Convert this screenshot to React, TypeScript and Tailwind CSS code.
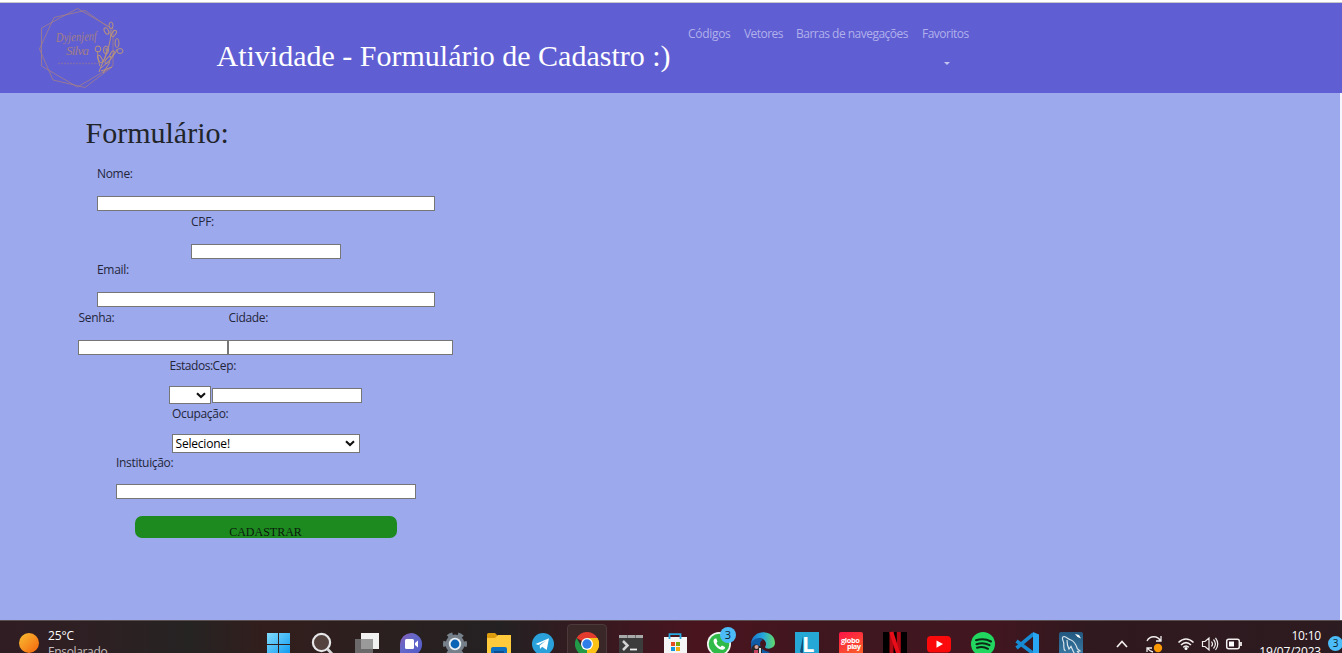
import type { ReactNode } from "react";

const ui = "font-['Open_Sans','Noto_Sans',sans-serif]";
const serif = "font-['Liberation_Serif',serif] tracking-normal";

function Logo() {
  return (
    <svg width="90" height="84" viewBox="36 6 90 84" fill="none" stroke="#a37f86" strokeWidth="0.8">
      <path d="M77.5 8.5 L113 29 V66 L77.5 87 L41.5 66 V28 Z" />
      <path d="M85 10.5 L54 17.500 L39.500 49 L53 80 L85 87.500 L112 67 M85 10.500 L108 27" />
      <g strokeWidth="1" stroke="#b8937c">
        <path d="M99 72 C104 58 111 47 111 30 M101 68 C108 62 114 57 117 49 M100 66 C98 59 97 54 98 51 M103 62 C106 57 107 53 106 48" />
        <ellipse cx="111" cy="25.500" rx="2" ry="3.500" />
        <ellipse cx="106.500" cy="31" rx="2" ry="3.500" transform="rotate(-30 106.500 31)" />
        <ellipse cx="114" cy="33.500" rx="1.800" ry="3.500" transform="rotate(35 114 33.500)" />
        <ellipse cx="117" cy="43" rx="2" ry="4.500" />
        <ellipse cx="120" cy="51" rx="3" ry="2.500" />
        <ellipse cx="106" cy="50" rx="2.500" ry="4" />
        <ellipse cx="98" cy="49" rx="2.800" ry="3" />
        <ellipse cx="100" cy="59" rx="1.800" ry="4" transform="rotate(-25 100 59)" />
        <ellipse cx="108" cy="60" rx="1.800" ry="4" transform="rotate(40 108 60)" />
        <ellipse cx="112" cy="54" rx="1.500" ry="3.500" transform="rotate(30 112 54)" />
        <path d="M101 71 L112 67 M103 73 L110 62" />
      </g>
      <g fill="#a37f86" stroke="none" fontFamily="Liberation Serif, serif" fontStyle="italic">
        <text x="56" y="41" fontSize="13" textLength="41" lengthAdjust="spacingAndGlyphs" transform="rotate(-2 76 40)">Dyjenjenf</text>
        <text x="66" y="55" fontSize="13" textLength="23">Silva</text>
      </g>
      <path d="M58 63.500 H98" strokeDasharray="2 1" strokeWidth="1.500" opacity="0.450" />
    </svg>
  );
}

function Field({ label, children, className = "" }: { label: string; children: ReactNode; className?: string }) {
  return (
    <label className={`flex flex-col justify-between ${className}`}>
      <span className="h-[22px] whitespace-nowrap pl-[0.5px] leading-[22px]">{label}</span>
      {children}
    </label>
  );
}

const inputBase = "block h-[15px] border border-[#767676] bg-white outline-none";

function Chevron() {
  return (
    <svg width="10" height="7" viewBox="0 0 10 7" fill="none" stroke="#111" strokeWidth="2.100">
      <path d="M1 1.200 L5 5 L9 1.200" />
    </svg>
  );
}

function Ico({ children }: { children: ReactNode }) {
  return (
    <div className="flex w-11 shrink-0 justify-center pt-[11px]">
      <svg width="24" height="24" viewBox="0 0 24 24" className="overflow-visible">{children}</svg>
    </div>
  );
}

function Apps() {
  return (
    <div className="flex h-12 items-start tracking-normal">
      <Ico>
        <defs>
          <linearGradient id="win" x1="0" y1="0" x2="1" y2="1"><stop stopColor="#82dcff" /><stop offset="1" stopColor="#0a98f0" /></linearGradient>
        </defs>
        <path fill="url(#win)" d="M0 1H11V12H0ZM12 1H23V12H12ZM0 13H11V24H0ZM12 13H23V24H12Z" />
      </Ico>
      <Ico>
        <circle cx="10.500" cy="10.500" r="8.600" fill="#54423f" stroke="#e6e6e8" strokeWidth="2.200" />
        <path d="M16.500 17 L22.500 23.500" stroke="#d8d8da" strokeWidth="2.800" />
      </Ico>
      <Ico>
        <path fill="#f1f1f1" d="M6 1H24V17H6Z" />
        <path fill="#6b6969" d="M0 7H18V22H0Z" />
        <path fill="#9a9a9a" d="M6 7H18V17H6Z" />
      </Ico>
      <Ico>
        <defs><linearGradient id="chat" x1="0" y1="0" x2="1" y2="1"><stop stopColor="#8a5bb5" /><stop offset="0.400" stopColor="#6468c8" /><stop offset="1" stopColor="#5058c8" /></linearGradient></defs>
        <path fill="url(#chat)" d="M12 1A11.300 11.300 0 1 1 6 22L1 24V12A11.300 11.300 0 0 1 12 1Z" />
        <rect x="6" y="7" width="9" height="10" rx="1.500" fill="#fff" />
        <path d="M16 11L19 8.500V15.500L16 13Z" fill="#fff" />
      </Ico>
      <Ico>
        <circle cx="12" cy="12" r="7" fill="none" stroke="#76808a" strokeWidth="5" />
        <circle cx="12" cy="12" r="10.200" fill="none" stroke="#76808a" strokeWidth="3.600" strokeDasharray="5.300 5.380" transform="rotate(-15 12 12)" />
        <circle cx="12" cy="12" r="6.200" fill="#e9eef3" />
        <circle cx="12" cy="12" r="4.400" fill="#0b63b5" />
      </Ico>
      <Ico>
        <path fill="#dc9c0e" d="M0 2.500A1.500 1.500 0 0 1 1.500 1H8L11 4V8H0Z" />
        <path fill="#ffcb3d" d="M0 6H8L11 3H24V22H0Z" />
        <path fill="#0f6fc0" d="M4 22V17A2 2 0 0 1 6 15H18A2 2 0 0 1 20 17V22Z" />
        <path fill="#0a4e90" d="M7 19H17V21H7Z" />
      </Ico>
      <Ico>
        <circle cx="12" cy="12" r="11" fill="#2aa1da" />
        <path fill="#fff" d="M4.500 12L18 6.300L15.700 18L11.200 14.800L9 17L8.700 13.600L15 8.500L7.500 13Z" />
      </Ico>
      <div className="flex w-11 shrink-0 justify-center pt-[3px]">
        <div className="flex h-10 w-10 justify-center rounded-[4px] border border-[#4b393b] bg-[#3a2829] pt-[7px]">
          <svg width="24" height="24" viewBox="0 0 24 24" className="shrink-0">
            <path fill="#e33b2e" d="M12 12L1.600 6A12 12 0 0 1 22.400 6Z" />
            <path fill="#fbc116" d="M12 12V6H22.400A12 12 0 0 1 12 24Z" />
            <path fill="#229b48" d="M12 12L12 24A12 12 0 0 1 1.600 6L6.800 15Z" />
            <path fill="#fbc116" d="M17.200 15L12 24A12 12 0 0 0 22.400 6H12Z" />
            <circle cx="12" cy="12" r="6" fill="#fff" />
            <circle cx="12" cy="12" r="4.700" fill="#2f7de9" />
          </svg>
        </div>
      </div>
      <Ico>
        <path fill="#3c3c3c" d="M0 3H24V24H0Z" />
        <path fill="#a9a9a9" d="M0 3H24V6H0Z" />
        <path fill="#6e6e6e" d="M8 3H9V6H8ZM16 3H17V6H16Z" />
        <path d="M4 9L8.500 13.500L4 18" stroke="#d4d4d4" strokeWidth="2.500" fill="none" />
        <path d="M11 17.500H18" stroke="#eee" strokeWidth="1.800" />
      </Ico>
      <Ico>
        <path fill="#f5f5f5" d="M1 5H24V24H1Z" />
        <path d="M6.500 7V2.200H17.500V7" fill="none" stroke="#29aae1" strokeWidth="1.800" />
        <path fill="#e64c22" d="M8 10H12V14H8Z" /><path fill="#77a80c" d="M13 10H17V14H13Z" />
        <path fill="#1596dc" d="M8 15H12V19H8Z" /><path fill="#f4ae0a" d="M13 15H17V19H13Z" />
      </Ico>
      <Ico>
        <circle cx="12" cy="12" r="12" fill="#f3f6f3" />
        <circle cx="12" cy="12" r="10.300" fill="#30ba48" />
        <path fill="#fff" d="M8 6.500C6 7.500 6 10 8 13C10.500 16.500 14 18.500 16.500 17.500C18 17 18.300 15.500 18 15L15 13.500C14 14 14 15 13.300 15C12 14.600 10 12.500 9.500 11.300C9.500 10.500 10.600 10.200 10.400 9.300L9.300 6.600Z" />
        <circle cx="21" cy="3" r="8" fill="#4cbcf8" />
        <text x="21" y="7" textAnchor="middle" fontSize="11" fill="#10202c">3</text>
      </Ico>
      <Ico>
        <defs><linearGradient id="edge"><stop stopColor="#1a74ca" /><stop offset="0.500" stopColor="#24a8dd" /><stop offset="1" stopColor="#63d968" /></linearGradient></defs>
        <path fill="#105ba5" d="M0 13C0 5 7 4 12 8C7 9 8 19 19 20L12 24C5 24 0 20 0 13Z" />
        <path fill="url(#edge)" d="M0 12C1-4 24-3 24 11C24 17 15 18 14 15C17 11 13 6 8 6C4 6 1 9 0 12Z" />
        <path fill="#29262a" d="M1 15Q4 10 8 14L11 14V22H1Z" />
        <circle cx="5.500" cy="15" r="2" fill="#d8a399" />
        <path fill="#c5415d" d="M3 18H7V22H3Z" /><path fill="#ddd" d="M8 16H10V21H8Z" />
      </Ico>
      <Ico>
        <path fill="#25a8d6" d="M0 0H24V24H0Z" />
        <path fill="#164f7a" d="M8 4L5 20L8 22Z" />
        <text x="7" y="19.500" fontSize="22" fontWeight="700" fill="#fff">L</text>
      </Ico>
      <Ico>
        <defs><linearGradient id="globo" x1="0" y1="0" x2="0.500" y2="1"><stop stopColor="#fb1348" /><stop offset="1" stopColor="#fb5b28" /></linearGradient></defs>
        <rect width="24" height="25" rx="2" fill="url(#globo)" />
        <g fontSize="7.500" fontWeight="700" fill="#fff"><text x="2" y="11" textLength="19">globo</text><text x="8" y="17.300" textLength="14">play</text></g>
      </Ico>
      <Ico>
        <path fill="#000" d="M0 0H24V24H0Z" />
        <path d="M8.500 0V24M15.800 0V24" stroke="#b10a14" strokeWidth="4" />
        <path d="M8.300 0L16 24" stroke="#e90d1a" strokeWidth="4" />
      </Ico>
      <Ico>
        <rect y="4" width="24" height="16.500" rx="4" fill="#fa0a0a" />
        <path fill="#fff" d="M9.500 8.500L16 12L9.500 15.800Z" />
      </Ico>
      <Ico>
        <circle cx="12" cy="12" r="12" fill="#21d760" />
        <path d="M5 8.300Q13 5.700 20 9.500M5.500 12.200Q12.500 10 18.500 13.200M6 15.800Q12 14 17 16.800" stroke="#0c2a16" strokeWidth="2" strokeLinecap="round" fill="none" />
      </Ico>
      <Ico>
        <path d="M1.500 9L19 22M1.500 16L18.500 1.800" stroke="#168bd3" strokeWidth="3.600" fill="none" />
        <path fill="#28a6f2" d="M18 0L24 2.500V22L18 24Z" />
      </Ico>
      <Ico>
        <defs><linearGradient id="sql" x2="0" y2="1"><stop stopColor="#23587f" /><stop offset="1" stopColor="#397aa5" /></linearGradient></defs>
        <rect width="24" height="25" rx="2" fill="url(#sql)" />
        <path d="M6.500 19C3.500 17 5.500 13 4.500 10C3 7 3 4.500 5 4.500C8 5 9 7.500 12 8C16 9.500 17.500 14 18.500 17L21 19L18.500 19.500L20.500 22M8 8L8.500 13L10 17L12 14.500L15.500 22" stroke="#d7e3eb" strokeWidth="1.200" fill="none" />
        <path d="M16 2L18.500 5L22 6.500L20 3Z" fill="#fff" />
      </Ico>
    </div>
  );
}

function Tray() {
  return (
    <svg width="128" height="33" viewBox="1115 620 128 33" fill="none" stroke="#f2eeee" strokeWidth="1.500">
      <path d="M1117 647L1122 641.500L1127 647" strokeWidth="1.700" />
      <path d="M1147 641A7.500 7.500 0 0 1 1160.500 641M1161 636V641H1156M1147 652V648H1152M1147.500 648A8 8 0 0 0 1153 652" strokeWidth="1.300" />
      <circle cx="1158" cy="648" r="4.200" fill="#fb9904" stroke="none" />
      <g strokeWidth="1.600">
        <path d="M1178.500 642.500Q1186 635.500 1193.500 642.500" /><path d="M1181 645Q1186 640.300 1191 645" /><path d="M1183.300 647.300Q1186 644.700 1188.700 647.300" />
      </g>
      <circle cx="1186" cy="648.500" r="1.500" fill="#fff" stroke="none" />
      <path d="M1202.500 641.500H1205L1209 638V650L1205 646.500H1202.500ZM1211.500 641.500Q1213.500 644 1211.500 646.500M1213.500 639.500Q1217.300 644 1213.500 648.500M1215.500 637.800Q1220 644 1215.500 650" strokeWidth="1.200" />
      <rect x="1226.700" y="639.200" width="12.600" height="9.600" rx="2" />
      <rect x="1229" y="641.500" width="5" height="5" fill="#fff" stroke="none" />
      <path d="M1241 642V646" strokeWidth="1.800" />
    </svg>
  );
}

export default function App() {
  return (
    <div className={`flex h-[653px] w-[1342px] flex-col overflow-hidden bg-[#9da9ed] text-[12px] ${ui}`}>
      <div className="h-[3px] shrink-0 border-b border-[#c8c8c8] bg-white" />

      <header className="flex h-[90px] shrink-0 items-start bg-[#5f5ed3]">
        <div className="ml-9 w-[180px] shrink-0 pt-[3px]"><Logo /></div>
        <h1 className={`w-[472px] shrink-0 whitespace-nowrap pl-[0.5px] pt-[35px] text-[30px] leading-9 text-white ${serif}`}>
          Atividade - Formulário de Cadastro :)
        </h1>
        <nav className="flex gap-3 pt-[22px] font-medium leading-[18px] text-[#b1b0eb]">
          <a className="w-11 whitespace-nowrap tracking-[-0.3px]">Códigos</a>
          <a className="w-10 whitespace-nowrap tracking-[-0.55px]">Vetores</a>
          <a className="w-[114px] whitespace-nowrap tracking-[-0.52px]">Barras de navegações</a>
          <a className="flex w-[49px] flex-col whitespace-nowrap tracking-[-0.5px]">
            Favoritos
            <svg width="6" height="3" viewBox="0 0 6 3" className="ml-[22px] mt-[19px]"><path d="M0 0H6L3 3Z" fill="#c5c4f0" /></svg>
          </a>
        </nav>
      </header>

      <main className="flex h-[527px] shrink-0 flex-col border-r-2 border-[#f4f5fd] pl-[78px] tracking-[-0.32px] text-[#23263b]">
        <h2 className={`ml-[7.500px] h-[70px] pt-[22px] text-[30px] leading-9 text-[#212529] ${serif}`}>Formulário:</h2>
        <form className="flex w-[375px] flex-col items-center">
          <Field label="Nome:" className="h-12"><input className={`${inputBase} w-[338px]`} /></Field>
          <Field label="CPF:" className="h-12"><input className={`${inputBase} w-[150px]`} /></Field>
          <Field label="Email:" className="h-12"><input className={`${inputBase} w-[338px]`} /></Field>
          <div className="flex h-12">
            <Field label="Senha:"><input className={`${inputBase} w-[150px]`} /></Field>
            <Field label="Cidade:"><input className={`${inputBase} w-[225px]`} /></Field>
          </div>
          <div className="flex h-12 gap-px">
            <Field label="Estados:" className="-mb-px w-[42px] tracking-[-0.45px]">
              <span className="flex h-[18px] items-center justify-end border border-[#767676] bg-white pr-1"><Chevron /></span>
            </Field>
            <Field label="Cep:"><input className={`${inputBase} w-[150px]`} /></Field>
          </div>
          <Field label="Ocupação:" className="h-[50px]">
            <span className="flex h-[19px] w-[188px] items-center justify-between border border-[#767676] bg-white pl-[3px] pr-1 text-black">
              <span className="leading-[17px] tracking-[-0.2px]">Selecione!</span><Chevron />
            </span>
          </Field>
          <Field label="Instituição:" className="-mt-px h-[47px]"><input className={`${inputBase} w-[300px]`} /></Field>
          <button type="button" className={`mt-[17px] flex h-[22px] w-[262px] justify-center rounded-[7px] bg-[#1d8a20] pt-[7px] text-[12px] leading-[18px] text-[#0b180c] ${serif}`}>
            CADASTRAR
          </button>
        </form>
      </main>

      <footer className="flex h-[33px] shrink-0 items-start overflow-hidden border-t border-[#5a5052] bg-[linear-gradient(90deg,#301d23_0px,#2d2023_100px,#262323_190px,#321e1c_265px,#2a2020_400px,#242122_500px,#3a1820_610px,#4a141e_700px,#3e171f_840px,#421620_990px,#30191f_1090px,#2c1b20_1342px)] text-white">
        <div className="flex w-[257px] shrink-0 items-start pl-[19px] pt-3">
          <span className="h-5 w-5 rounded-full bg-linear-to-br from-[#f6bd32] to-[#f26109]" />
          <div className="ml-[9px] flex flex-col text-[12px] leading-4 tracking-[-0.35px]">
            <span className="-mt-[5px] tracking-[-0.1px]">25°C</span>
            <span className="text-[#c6bebf]">Ensolarado</span>
          </div>
        </div>
        <Apps />
        <div className="-mt-px ml-[22px] w-[128px] shrink-0"><Tray /></div>
        <div className="flex w-[78px] shrink-0 flex-col items-end pt-[7px] text-[12px] leading-4 tracking-[-0.2px]">
          <span>10:10</span><span>19/07/2023</span>
        </div>
        <span className="ml-[7px] mt-[15px] h-[15px] w-[15px] shrink-0 rounded-full bg-[#4cbcf8] text-center text-[10px] leading-[15px] text-[#10202c]">3</span>
      </footer>
    </div>
  );
}
